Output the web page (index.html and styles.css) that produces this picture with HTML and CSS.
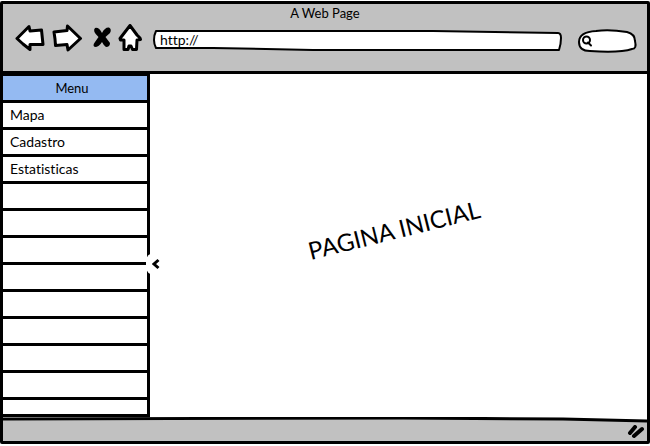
FILE: index.html
```
<!DOCTYPE html>
<html lang="pt">
<head>
<meta charset="utf-8">
<title>A Web Page</title>
<link rel="stylesheet" href="styles.css">
</head>
<body>
<div class="window">
  <header class="chrome">
    <div class="title">A Web Page</div>
    <div class="toolbar">
      <button class="tool back" aria-label="Back">
        <svg width="30" height="28" viewBox="0 0 30 28"><path class="ink" d="M2 14.500 L14 2.500 L15 7 L26.500 6 L28 20.500 L15 20.500 L15 25.500 L8 20 Z"/></svg>
      </button>
      <button class="tool forward" aria-label="Forward">
        <svg width="32" height="28" viewBox="0 0 32 28"><path class="ink" d="M3 8 L16 6.500 L16.500 2 L29.500 14.500 L17 26 L16 20.500 L4.500 21.500 L4 15 Z"/></svg>
      </button>
      <button class="tool stop" aria-label="Stop">
        <svg width="20" height="28" viewBox="0 0 20 28"><path class="blot" d="M3 4 Q7 3 10 9 Q13 3 17 3.500 Q20 5 18 9 L13.500 13 L18 19 Q18 23 14 23 Q12 22 10 18 Q7 23 3 23 Q0 22 3 18 L6.500 13 Q0 7 3 4 Z"/></svg>
      </button>
      <button class="tool home" aria-label="Home">
        <svg width="24" height="28" viewBox="0 0 24 28"><path class="ink" d="M12 1.500 L2 14.500 L2.500 16 L6 16 L6 25.500 L10 25.500 L11 22 L13 22 L14.500 25.500 L18.500 25.500 L19 16 L22.500 15.500 L22 14 L19 11 Z"/></svg>
      </button>
      <label class="field address">
        <svg class="outline" viewBox="0 0 410 22" preserveAspectRatio="none" aria-hidden="true"><path class="ink" d="M3 1 L280 1 L405 3 Q408 3 408 8 Q408 14 406 20 L160 20 L60 18 L3 18 Q1 14 1 10 Q1 5 3 1 Z"/></svg>
        <input type="text" value="http://" aria-label="Address">
      </label>
      <label class="field search">
        <svg class="outline" viewBox="0 0 60 26" preserveAspectRatio="none" aria-hidden="true"><path class="ink" d="M2 14 Q2 4 19 3 Q32 1 50 4 Q58 6 58 13 Q60 21 55 21 Q43 25 13 23 Q2 23 2 14 Z"/></svg>
        <svg class="lens" width="12" height="12" viewBox="0 0 12 12" aria-hidden="true"><circle cx="5.500" cy="5" r="3.500"/><path d="M7 7.500 L10 10.500"/></svg>
        <input type="search" aria-label="Search">
      </label>
    </div>
  </header>
  <main class="body">
    <nav class="sidebar" aria-label="Menu">
      <h2 class="row heading">Menu</h2>
      <a class="row" href="#mapa">Mapa</a>
      <a class="row" href="#cadastro">Cadastro</a>
      <a class="row" href="#estatisticas">Estatisticas</a>
      <div class="row"></div>
      <div class="row"></div>
      <div class="row"></div>
      <div class="row"></div>
      <div class="row"></div>
      <div class="row"></div>
      <div class="row"></div>
      <div class="row"></div>
      <div class="row rest"></div>
      <button class="collapse" aria-label="Collapse menu"><svg width="8" height="12" viewBox="0 0 8 12"><path d="M6.500 2 L2 6 L6.500 10"/></svg></button>
    </nav>
    <section class="content">
      <h1>PAGINA INICIAL</h1>
    </section>
  </main>
  <footer class="status">
    <svg class="edge" viewBox="0 0 644 6" preserveAspectRatio="none" aria-hidden="true"><path class="paper" d="M0 0 L644 0 L644 4 L400 1 L0 1 Z"/><path class="stroke" d="M0 2 L400 1 L560 2 L644 4"/></svg>
    <svg class="grip" width="18" height="14" viewBox="0 0 18 14" aria-hidden="true"><path d="M3 8 L8 2 M7 11 L15 4"/></svg>
  </footer>
</div>
</body>
</html>
```
FILE: styles.css
```
* {
  box-sizing: border-box;
}

body {
  margin: 0;
  padding: 1px 0 2px;
  background: #fff;
  color: #000;
  font: 13px/18px Lato, "Open Sans", sans-serif;
  font-variant-ligatures: none;
}

button,
input {
  margin: 0;
  padding: 0;
  border: 0;
  background: none;
  color: inherit;
  font: inherit;
}

svg {
  display: block;
}

.window {
  display: grid;
  grid-template-rows: auto 1fr auto;
  min-height: calc(100vh - 3px);
  border: 3px solid #000;
  border-radius: 2px;
}

.chrome {
  background: #c1c1c1;
  border-bottom: 3px solid #000;
  padding-bottom: 19px;
}

.title {
  height: 19px;
  line-height: 19px;
  text-align: center;
}

.toolbar {
  display: flex;
  align-items: center;
  height: 29px;
  padding: 0 10px 0 12px;
}

.ink {
  fill: #fff;
  stroke: #000;
  stroke-width: 3;
  stroke-linejoin: round;
  vector-effect: non-scaling-stroke;
}

.forward {
  margin-left: 6px;
}

.stop {
  margin-left: 9px;
}

.home {
  margin-left: 6px;
}

.field {
  position: relative;
  display: flex;
  align-items: center;
}

.field input {
  position: relative;
  width: 100%;
  outline: 0;
  font-size: 14px;
}

.outline {
  position: absolute;
  inset: 0;
  width: 100%;
  height: 100%;
  overflow: visible;
}

.address {
  flex: 1;
  height: 22px;
  margin: 7px 14px 0 11px;
  padding: 0 8px 3px 7px;
}

.address .ink,
.search .ink {
  stroke-width: 2;
}

.search {
  width: 60px;
  height: 26px;
  margin-top: 7px;
  padding: 0 8px 0 4px;
}

.lens {
  position: relative;
  flex: none;
  fill: none;
  stroke: #000;
  stroke-width: 2;
  stroke-linecap: round;
}

.body {
  display: grid;
  grid-template-columns: 147px 1fr;
}

.sidebar {
  position: relative;
  display: flex;
  flex-direction: column;
  border: solid #000;
  border-width: 2px 3px 0 0;
}

.row {
  height: 27px;
  margin: 0;
  padding-left: 7px;
  border-bottom: 3px solid #000;
  color: inherit;
  font-size: 14px;
  font-weight: 400;
  line-height: 24px;
  text-decoration: none;
}

.heading {
  padding: 0 6px 0 0;
  background: #94baf2;
  font-size: 13px;
  text-align: center;
}

.rest {
  flex: 1;
  height: auto;
  min-height: 16px;
}

.collapse {
  position: absolute;
  top: 177px;
  right: -14px;
  width: 15px;
  height: 22px;
  padding-left: 6px;
  border-radius: 8px 0 0 8px;
  background: #fff;
}

.collapse path {
  fill: none;
  stroke: #000;
  stroke-width: 3;
}

.content {
  display: grid;
  place-items: center;
  padding: 0 8px 32px 0;
}

h1 {
  margin: 0;
  font-size: 24px;
  font-weight: 400;
  line-height: 30px;
  transform: rotate(-14deg);
}

.status {
  display: flex;
  justify-content: space-between;
  position: relative;
  height: 24px;
  background: #c1c1c1;
}

.edge {
  width: 100%;
  height: 6px;
}

.paper {
  fill: #fff;
}

.stroke {
  fill: none;
  stroke: #000;
  stroke-width: 3;
}

.grip {
  position: absolute;
  right: 2px;
  bottom: 2px;
  fill: none;
  stroke: #000;
  stroke-width: 4;
  stroke-linecap: round;
}
```
